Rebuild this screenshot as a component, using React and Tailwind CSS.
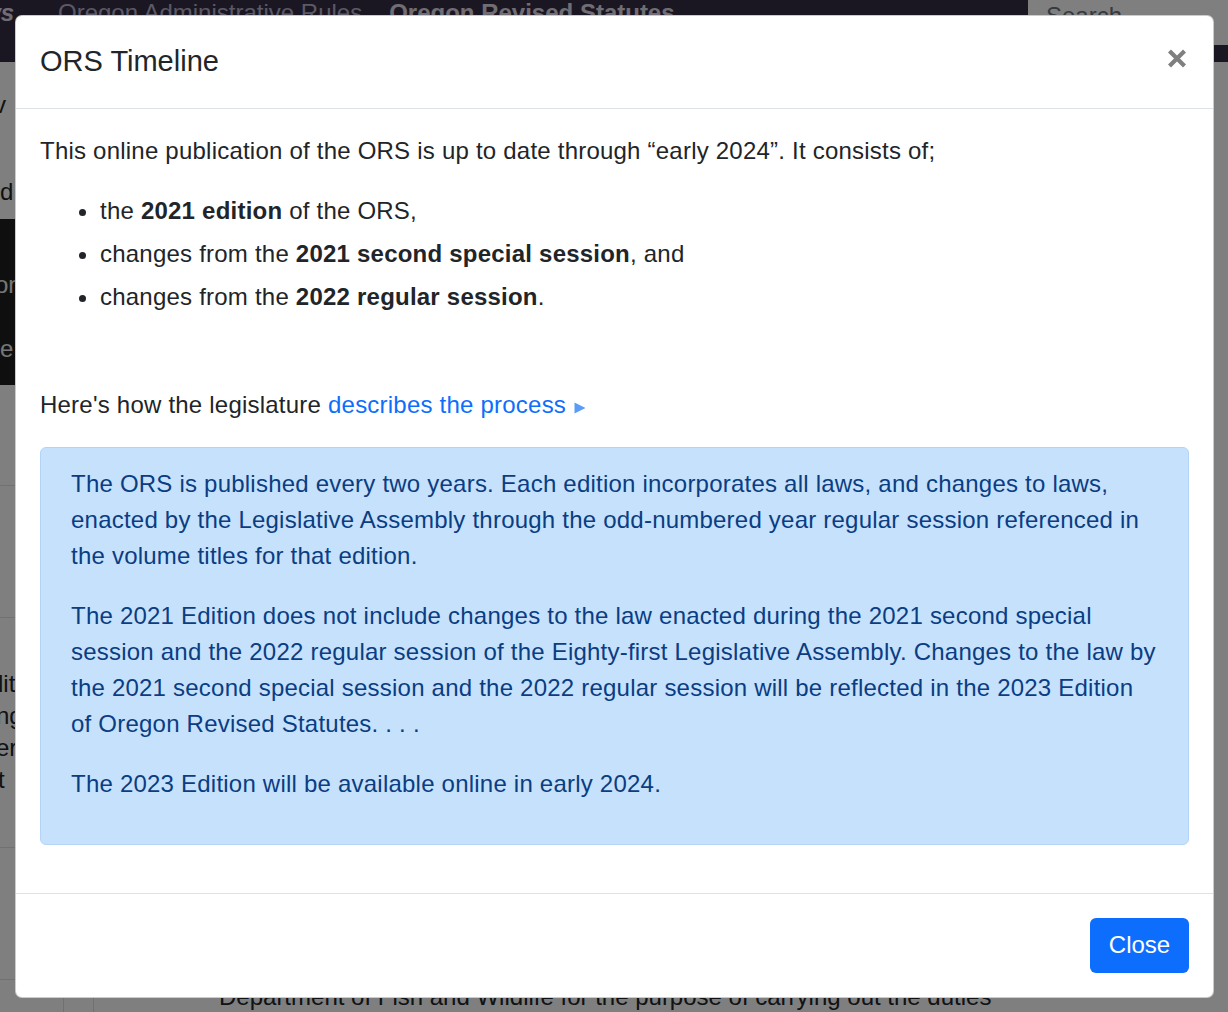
import React from "react";

function XIcon() {
  return (
    <svg width="20" height="19" viewBox="0 0 20 19" className="mb-[6px] mr-[2px] shrink-0">
      <path d="M2.5 2 L17.5 17 M17.5 2 L2.5 17" stroke="#7f7f7f" strokeWidth="4.2" fill="none" />
    </svg>
  );
}

function Triangle() {
  return (
    <svg width="12" height="12" viewBox="0 0 12 12" className="ml-[8px] inline-block align-[-1px]">
      <path d="M0.5 0.5 L11.5 6 L0.5 11.5 Z" fill="#5a9cf8" />
    </svg>
  );
}

export default function App() {
  return (
    <div className="relative h-[1012px] w-[1228px] overflow-hidden bg-white font-['Liberation_Sans',Arial,sans-serif] text-[#212529]">
      {/* background page */}
      <header className="flex h-[62px] items-start bg-[#362e44] text-[24px] leading-none">
        <span className="ml-[-18px] pt-[1px] font-bold italic text-[#e0dde8]">ws</span>
        <nav className="ml-[44px] flex gap-[27px] pt-[1px]">
          <span className="text-[#b6b2cc]">Oregon Administrative Rules</span>
          <span className="font-bold text-[#e0dde8]">Oregon Revised Statutes</span>
        </nav>
        <div className="ml-auto h-[45px] w-[200px] bg-white pl-[18px] pt-[4px] text-[#6c757d]">Search</div>
      </header>
      <main className="flex flex-col text-[24px] leading-none">
        <div className="flex">
          <div className="flex w-[300px] flex-col">
            <div className="h-[157px] pt-[31px]">
              <div className="ml-[-6px]">v</div>
              <div className="mt-[63px]">d</div>
            </div>
            <div className="h-[166px] bg-[#1e1e1e] pt-[54px] text-[#eeeeee]">
              <div className="ml-[-5px]">on</div>
              <div className="mt-[40px]">e</div>
            </div>
            <div className="h-[101px] border-b border-[#dee2e6]"></div>
            <div className="h-[132px] border-b border-[#dee2e6]"></div>
            <div className="h-[230px] border-b border-[#dee2e6] pt-[50px] leading-[32px]">
              <div className="ml-[-2px]">lit</div>
              <div className="ml-[-4px]">ng</div>
              <div className="ml-[-4px]">er</div>
              <div className="ml-[-2px]">t</div>
            </div>
            <div className="h-[132px] border-b border-[#dee2e6]"></div>
          </div>
        </div>
        <div className="flex h-[40px]">
          <div className="w-[64px] border-r border-[#dee2e6]"></div>
          <div className="w-[30px] border-r border-[#dee2e6]"></div>
          <div className="pl-[125px] pt-[5px] whitespace-nowrap">
            Department of Fish and Wildlife for the purpose of carrying out the duties
          </div>
        </div>
      </main>

      {/* backdrop */}
      <div className="absolute inset-0 bg-black/50"></div>

      {/* modal */}
      <div className="absolute left-[15px] top-[15px] w-[1199px] rounded-[7px] border border-black/20 bg-white">
        <div className="flex items-center justify-between border-b border-[#dee2e6] px-[24px] py-[24px]">
          <h5 className="text-[29px] font-normal leading-[1.5] text-[#212529]">ORS Timeline</h5>
          <XIcon />
        </div>
        <div className="px-[24px] pt-[24px] pb-[24px] text-[24px] leading-[36px] tracking-[0.22px]">
          <p className="mb-[24px]">
            This online publication of the ORS is up to date through “early 2024”. It consists of;
          </p>
          <ul className="mb-[72px] list-disc pl-[60px]">
            <li className="mb-[7px]">
              the <b>2021 edition</b> of the ORS,
            </li>
            <li className="mb-[7px]">
              changes from the <b>2021 second special session</b>, and
            </li>
            <li>
              changes from the <b>2022 regular session</b>.
            </li>
          </ul>
          <p className="mb-[24px]">
            Here's how the legislature <a className="text-[#0d6efd]">describes the process</a>
            <Triangle />
          </p>
          <div className="mb-[24px] rounded-[6px] border border-[#b3d4f8] bg-[#c6e1fc] px-[30px] pt-[18px] pb-[18px] text-[#0a3d82]">
            <p className="mb-[24px]">
              The ORS is published every two years. Each edition incorporates all laws, and changes to laws,
              enacted by the Legislative Assembly through the odd-numbered year regular session referenced in
              the volume titles for that edition.
            </p>
            <p className="mb-[24px]">
              The 2021 Edition does not include changes to the law enacted during the 2021 second special
              session and the 2022 regular session of the Eighty-first Legislative Assembly. Changes to the law by
              the 2021 second special session and the 2022 regular session will be reflected in the 2023 Edition
              of Oregon Revised Statutes. . . .
            </p>
            <p className="mb-[24px]">The 2023 Edition will be available online in early 2024.</p>
          </div>
        </div>
        <div className="flex justify-end border-t border-[#dee2e6] px-[24px] pt-[24px] pb-[24px]">
          <button className="h-[55px] w-[99px] rounded-[6px] bg-[#0d6efd] text-[24px] leading-[36px] text-white">
            Close
          </button>
        </div>
      </div>
    </div>
  );
}
